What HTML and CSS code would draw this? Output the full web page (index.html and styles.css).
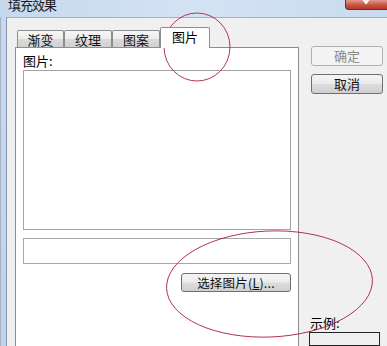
FILE: index.html
```html
<!DOCTYPE html>
<html>
<head>
<meta charset="utf-8">
<link rel="stylesheet" href="styles.css">
</head>
<body>
<div class="window">
  <div class="titlebar">
    <div class="title">填充效果</div>
    <div class="close">
      <svg class="close-x" width="10" height="6" viewBox="0 0 10 6"><path d="M1 -2 L6 3.5 M9 -2 L4 3.5" stroke="#fff" stroke-width="2" fill="none"/></svg>
    </div>
  </div>
  <div class="frame">
    <div class="frame-left"></div>
    <div class="client">
      <div class="tabctl">
        <div class="tabstrip">
          <div class="tab first">渐变</div>
          <div class="tab">纹理</div>
          <div class="tab">图案</div>
          <div class="tab selected">图片</div>
        </div>
        <div class="panel">
          <div class="label">图片:</div>
          <div class="picbox"></div>
          <div class="field"></div>
          <div class="row-end">
            <div class="btn wide">选择图片(<u>L</u>)...</div>
          </div>
        </div>
      </div>
      <div class="side">
        <div class="btn disabled">确定</div>
        <div class="btn gap">取消</div>
        <div class="sample-label">示例:</div>
        <div class="sample"></div>
      </div>
    </div>
  </div>
</div>
<svg class="marks" width="387" height="346" viewBox="0 0 387 346">
  <ellipse cx="197" cy="47" rx="33" ry="34" fill="none" stroke="#a8223c" stroke-width="0.9"/>
  <ellipse cx="269.5" cy="284" rx="103" ry="53" fill="none" stroke="#a8223c" stroke-width="0.9" transform="rotate(-2.5 269.5 284)"/>
</svg>
</body>
</html>
```

FILE: styles.css
```css
html, body {
  margin: 0;
  padding: 0;
}
body {
  width: 387px;
  height: 346px;
  overflow: hidden;
  position: relative;
  font-family: "Noto Sans CJK SC", "Microsoft YaHei", sans-serif;
  font-size: 13px;
  color: #000;
  background: #f0f0f0;
}
.window {
  display: flex;
  flex-direction: column;
  height: 346px;
}
.titlebar {
  height: 17px;
  display: flex;
  background: linear-gradient(90deg, #c6d8ee 0%, #d4e3f4 50%, #c9dbf0 100%);
  overflow: hidden;
}
.title {
  padding-left: 8px;
  line-height: 13px;
  margin-top: -2px;
  height: 14px;
  color: #1a1a1a;
  font-size: 13px;
  letter-spacing: -1px;
}
.close {
  margin-left: auto;
  width: 42px;
  height: 10px;
  box-sizing: border-box;
  border: 1px solid #6b2a22;
  border-top: none;
  border-right: none;
  border-radius: 0 0 0 4px;
  background: linear-gradient(#e29a8c, #c6503e 60%, #b93a2a);
  display: flex;
  justify-content: center;
}
.close-x {
  display: block;
  margin-left: -2px;
}
.frame {
  flex: 1;
  display: flex;
  min-height: 0;
}
.frame-left {
  width: 5px;
  background: linear-gradient(#c9daef, #c0d3eb);
  border-left: 1px solid #a7b3c3;
  border-right: 1px solid #8397b1;
}
.client {
  flex: 1;
  display: flex;
  background: #f0f0f0;
  border-top: 1px solid #a2b2c6;
  padding: 9px 0 0 8px;
  min-height: 0;
}
.tabctl {
  width: 284px;
  display: flex;
  flex-direction: column;
}
.tabstrip {
  height: 20px;
  display: flex;
  align-items: flex-end;
  padding-left: 2px;
  position: relative;
  z-index: 1;
}
.tab {
  box-sizing: border-box;
  width: 48px;
  height: 17px;
  border: 1px solid #8c8e94;
  border-bottom: none;
  border-radius: 2px 2px 0 0;
  background: linear-gradient(#f6f6f6, #ebebeb 50%, #dadada 51%, #d2d2d2);
  text-align: center;
  line-height: 17px;
  color: #111;
}
.tab.first {
  width: 47px;
}
.tab.selected {
  width: 50px;
  height: 21px;
  margin-bottom: -1px;
  background: #fff;
  line-height: 17px;
  padding-bottom: 3px;
  color: #000;
}
.panel {
  flex: 1;
  background: #fff;
  border: 1px solid #8c8e94;
  border-bottom: none;
  padding: 5px 7px 0 7px;
  display: flex;
  flex-direction: column;
}
.label {
  line-height: 16px;
  margin-bottom: 1px;
}
.picbox {
  height: 160px;
  box-sizing: border-box;
  border: 1px solid #a3a3a3;
}
.field {
  margin-top: 8px;
  height: 26px;
  box-sizing: border-box;
  border: 1px solid #a8a8a8;
}
.row-end {
  display: flex;
  justify-content: flex-end;
  margin-top: 9px;
}
.btn {
  box-sizing: border-box;
  height: 20px;
  border: 1px solid #707070;
  border-radius: 3px;
  background: linear-gradient(#f4f4f4, #ececec 48%, #dddddd 52%, #cfcfcf);
  text-align: center;
  line-height: 18px;
  color: #111;
}
.btn.wide {
  width: 110px;
  height: 19px;
  line-height: 17px;
  font-size: 12.5px;
  letter-spacing: 0.2px;
}
.btn u {
  text-underline-offset: 1px;
}
.side {
  width: 72px;
  margin-left: 12px;
  padding-top: 19px;
  display: flex;
  flex-direction: column;
}
.btn.disabled {
  border-color: #adb2b5;
  background: #f4f4f4;
  color: #8a8a8a;
}
.btn.gap {
  margin-top: 8px;
}
.sample-label {
  margin-top: 221px;
  margin-left: -1px;
  line-height: 16px;
}
.sample {
  margin-top: 1px;
  margin-left: -2px;
  width: 71px;
  height: 60px;
  box-sizing: border-box;
  border: 1px solid #222;
  background: #f0f0f0;
}
.marks {
  position: absolute;
  left: 0;
  top: 0;
  pointer-events: none;
}
```
